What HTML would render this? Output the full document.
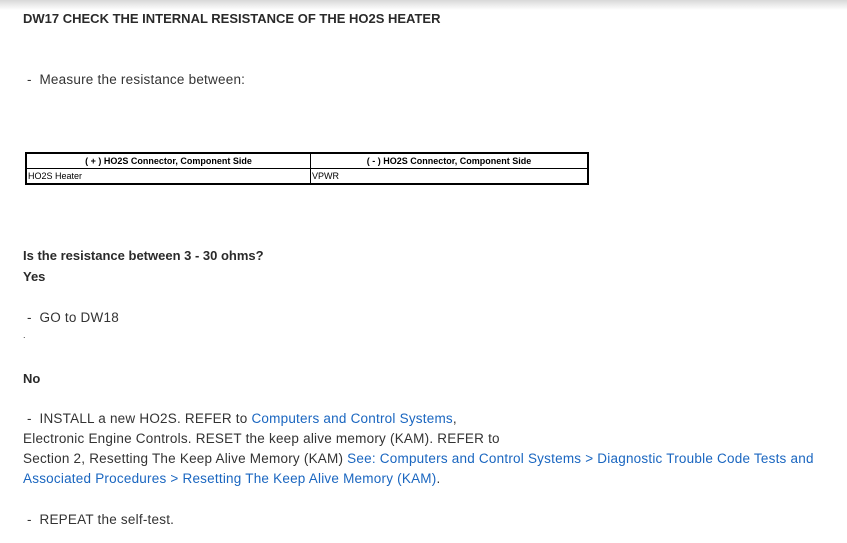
<!DOCTYPE html>
<html><head><style>
body{margin:0;width:847px;height:543px;background:#fff;font-family:"Liberation Sans",Arial,sans-serif;color:#333;position:relative;overflow:hidden}
.sh{position:absolute;left:0;top:0;width:847px;height:10px;background:linear-gradient(#d8d8d8,#fff)}
.t{position:absolute;white-space:nowrap;font-size:13.5px;letter-spacing:0.22px}
.b{font-weight:bold;font-size:13px;letter-spacing:0px;color:#2a2a2a}
a{color:#1a66c0;text-decoration:none}
table{position:absolute;left:25px;top:152px;width:564px;border-collapse:collapse;border:2px solid #000;font-size:9px;color:#000}
td{border:1px solid #000;height:14px;padding:0 1px;line-height:14px}
th{border:1px solid #000;height:14px;font-weight:bold;line-height:14px;padding:0}
.d{letter-spacing:0;margin-right:4px}
</style></head><body>
<div class="sh"></div>
<div class="t b" style="left:23px;top:11px">DW17 CHECK THE INTERNAL RESISTANCE OF THE HO2S HEATER</div>
<div class="t" style="left:27px;top:72px"><span class="d">-</span> Measure the resistance between:</div>
<table><tr><th style="width:283px">( + ) HO2S Connector, Component Side</th><th>( - ) HO2S Connector, Component Side</th></tr>
<tr><td>HO2S Heater</td><td>VPWR</td></tr></table>
<div class="t b" style="left:23px;top:248px">Is the resistance between 3 - 30 ohms?</div>
<div class="t b" style="left:23px;top:269px">Yes</div>
<div class="t" style="left:27px;top:310px"><span class="d">-</span> GO to DW18</div>
<div class="t" style="left:23px;top:330px;font-size:9px">.</div>
<div class="t b" style="left:23px;top:371px">No</div>
<div class="t" style="left:27px;top:411px"><span class="d">-</span> INSTALL a new HO2S. REFER to <a>Computers and Control Systems</a>,</div>
<div class="t" style="left:23px;top:431px">Electronic Engine Controls. RESET the keep alive memory (KAM). REFER to</div>
<div class="t" style="left:23px;top:451px">Section 2, Resetting The Keep Alive Memory (KAM) <a>See: Computers and Control Systems &gt; Diagnostic Trouble Code Tests and</a></div>
<div class="t" style="left:23px;top:471px"><a>Associated Procedures &gt; Resetting The Keep Alive Memory (KAM)</a>.</div>
<div class="t" style="left:27px;top:512px"><span class="d">-</span> REPEAT the self-test.</div>
</body></html>
